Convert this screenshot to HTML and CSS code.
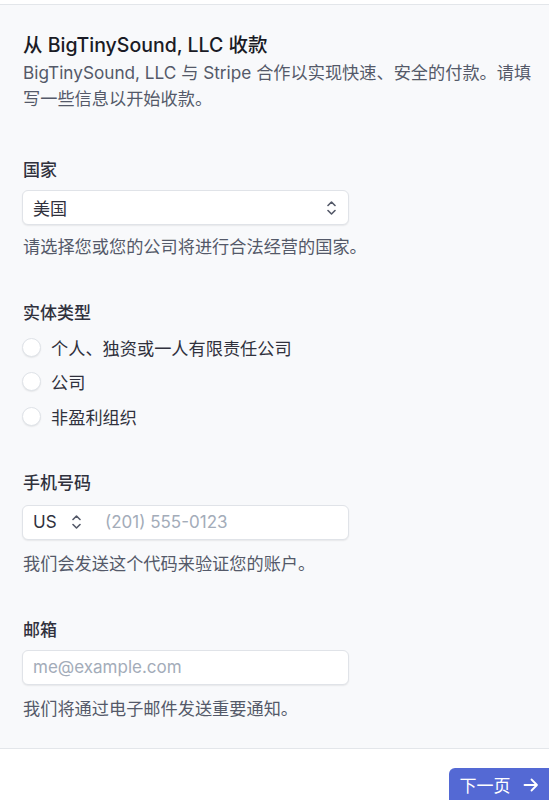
FILE: index.html
```html
<!DOCTYPE html>
<html lang="zh-CN">
<head>
<meta charset="utf-8">
<title>从 BigTinySound, LLC 收款</title>
<link rel="stylesheet" href="styles.css">
</head>
<body>
<div class="topstrip"></div>
<main class="main">
  <h1 class="title">从 BigTinySound, LLC 收款</h1>
  <p class="desc">BigTinySound, LLC 与 Stripe 合作以实现快速、安全的付款。请填写一些信息以开始收款。</p>

  <section class="field first">
    <div class="label">国家</div>
    <div class="input select">
      <span class="value">美国</span>
      <svg class="chev" width="9" height="14" viewBox="0 0 9 14"><path d="M1 4.5 L4.5 1 L8 4.5 M1 9.5 L4.5 13 L8 9.5" fill="none" stroke="#545969" stroke-width="1.6" stroke-linecap="round" stroke-linejoin="round"/></svg>
    </div>
    <div class="help">请选择您或您的公司将进行合法经营的国家。</div>
  </section>

  <section class="field">
    <div class="label">实体类型</div>
    <div class="radios">
      <div class="radio-row"><span class="radio"></span><span class="rtext">个人、独资或一人有限责任公司</span></div>
      <div class="radio-row"><span class="radio"></span><span class="rtext">公司</span></div>
      <div class="radio-row"><span class="radio"></span><span class="rtext">非盈利组织</span></div>
    </div>
  </section>

  <section class="field phone-field">
    <div class="label">手机号码</div>
    <div class="input phone">
      <span class="cc">US</span>
      <svg class="chev" width="9" height="14" viewBox="0 0 9 14"><path d="M1 4.5 L4.5 1 L8 4.5 M1 9.5 L4.5 13 L8 9.5" fill="none" stroke="#545969" stroke-width="1.6" stroke-linecap="round" stroke-linejoin="round"/></svg>
      <span class="placeholder">(201) 555-0123</span>
    </div>
    <div class="help">我们会发送这个代码来验证您的账户。</div>
  </section>

  <section class="field email-field">
    <div class="label">邮箱</div>
    <div class="input">
      <span class="placeholder">me@example.com</span>
    </div>
    <div class="help">我们将通过电子邮件发送重要通知。</div>
  </section>
</main>
<footer class="footer">
  <button class="next">下一页
    <svg width="16" height="14" viewBox="0 0 16 14"><path d="M1.5 7 H14 M8.5 1.5 L14 7 L8.5 12.5" fill="none" stroke="#ffffff" stroke-width="1.8" stroke-linecap="round" stroke-linejoin="round"/></svg>
  </button>
</footer>
</body>
</html>
```
FILE: styles.css
```css
* { box-sizing: border-box; }
html, body { margin: 0; padding: 0; }
body {
  background: #ffffff;
  font-family: Inter, "Noto Sans CJK SC", sans-serif;
  color: #30313d;
  width: 549px;
  overflow: hidden;
}
.topstrip {
  height: 4px;
  background: #ffffff;
}
.main {
  background: #f8f9fb;
  border-top: 1px solid #e3e6ea;
  border-bottom: 1px solid #e3e6ea;
  padding: 27px 10px 27px 23px;
}
.title {
  margin: 0;
  font-size: 19.5px;
  line-height: 26px;
  font-weight: 500;
  color: #1a1b25;
}
.desc {
  margin: 2px 0 0;
  font-size: 17.2px;
  line-height: 26px;
  color: #545969;
}
.field { margin-top: 42px; }
.field.first { margin-top: 46px; }
.label {
  font-size: 17px;
  line-height: 24px;
  font-weight: 500;
  color: #30313d;
}
.input {
  margin-top: 8px;
  margin-left: -1px;
  width: 327px;
  height: 35px;
  background: #ffffff;
  border: 1px solid #e0e3e8;
  border-radius: 6px;
  box-shadow: 0 1px 1.5px rgba(0, 0, 0, 0.07);
  display: flex;
  align-items: center;
  padding: 0 12px 0 10px;
  font-size: 17px;
}
.select { justify-content: space-between; }
.value { color: #30313d; }
.cc { color: #30313d; width: 39px; }
.phone .chev { margin-right: 24px; }
.placeholder { color: #a3acb9; }
.help {
  margin-top: 10px;
  font-size: 17.2px;
  line-height: 24px;
  color: #545969;
}
.radios { margin-top: 5px; }
.radio-row {
  display: flex;
  align-items: center;
  height: 34.5px;
  margin-left: -1px;
}
.radio {
  width: 19px;
  height: 19px;
  border-radius: 50%;
  background: #ffffff;
  border: 1px solid #dfe3e8;
  box-shadow: 0 1px 1.5px rgba(0, 0, 0, 0.08);
  margin-right: 10px;
  flex: none;
}
.rtext {
  font-size: 17.2px;
  color: #30313d;
}
.phone-field { margin-top: 37px; }
.phone-field .input { margin-top: 10px; }
.phone-field .help { margin-top: 12px; }
.email-field .help { margin-top: 12px; }
.footer {
  display: flex;
  justify-content: flex-end;
  padding-top: 19px;
}
.next {
  width: 100px;
  height: 38px;
  background: #5469d4;
  color: #ffffff;
  border: none;
  border-radius: 6px 0 0 6px;
  font-family: Inter, "Noto Sans CJK SC", sans-serif;
  font-size: 17px;
  display: flex;
  align-items: center;
  justify-content: center;
  gap: 12px;
  padding: 0 0 4px;
}
```
